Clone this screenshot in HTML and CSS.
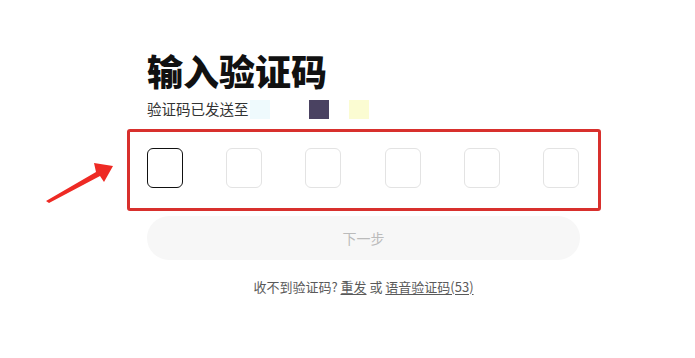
FILE: index.html
```html
<!DOCTYPE html>
<html lang="zh-CN">
<head>
<meta charset="utf-8">
<title>输入验证码</title>
<link rel="stylesheet" href="styles.css">
</head>
<body>
<main class="panel">
  <h1 class="title">输入验证码</h1>
  <p class="subtitle">验证码已发送至<span class="mask mask-cyan"></span><span class="mask mask-dark"></span><span class="mask mask-yellow"></span></p>
  <div class="code-row">
    <div class="cell active"></div>
    <div class="cell"></div>
    <div class="cell"></div>
    <div class="cell"></div>
    <div class="cell"></div>
    <div class="cell"></div>
    <div class="annotation"></div>
    <svg class="arrow" width="80" height="50" viewBox="40 160 80 50">
      <polygon points="46,201 96,172 94,163 113,166 104,182 100,176 49,203" fill="#ee2a24"/>
    </svg>
  </div>
  <button class="next" type="button">下一步</button>
  <p class="help">收不到验证码? <a class="link">重发</a> 或 <a class="link">语音验证码(53)</a></p>
</main>
</body>
</html>
```

FILE: styles.css
```css
html, body {
  margin: 0;
  padding: 0;
  background: #ffffff;
}
body {
  width: 695px;
  height: 358px;
  overflow: hidden;
  font-family: "Noto Sans CJK SC", "Noto Sans", sans-serif;
  color: #333;
}
.panel {
  margin-left: 147px;
  width: 433px;
  padding-top: 50px;
}
.title {
  margin: 0;
  font-size: 36px;
  line-height: 40px;
  font-weight: 900;
  color: #111;
  letter-spacing: 0;
}
.subtitle {
  margin: 9px 0 0;
  font-size: 14.5px;
  line-height: 20px;
  color: #333;
  display: flex;
  align-items: center;
}
.mask {
  display: inline-block;
  width: 20px;
  height: 19px;
}
.mask-cyan {
  background: #effafd;
  margin-left: 1px;
}
.mask-dark {
  background: #4a4261;
  margin-left: 39px;
}
.mask-yellow {
  background: #fbfcd2;
  margin-left: 20px;
}
.code-row {
  position: relative;
  margin-top: 29px;
  display: flex;
  justify-content: space-between;
  width: 432px;
}
.cell {
  width: 36px;
  height: 40px;
  box-sizing: border-box;
  border: 1px solid #e3e3e3;
  border-radius: 6px;
  background: #fff;
}
.cell.active {
  border: 1.5px solid #111;
}
.annotation {
  position: absolute;
  left: -20px;
  right: -22px;
  top: -19px;
  bottom: -23px;
  border: 3px solid #d8302d;
  border-radius: 3px;
}
.arrow {
  position: absolute;
  left: -107px;
  top: 12px;
}
.next {
  display: block;
  margin-top: 28px;
  width: 433px;
  height: 44px;
  border: none;
  border-radius: 22px;
  background: #f7f7f7;
  color: #bbbbbb;
  font-family: inherit;
  font-size: 14px;
  padding: 0;
}
.help {
  margin: 17px 0 0;
  text-align: center;
  font-size: 13px;
  line-height: 20px;
  color: #5a5a5a;
}
.link {
  color: #5a5a5a;
  text-decoration: underline;
  text-underline-offset: 2px;
}
```
